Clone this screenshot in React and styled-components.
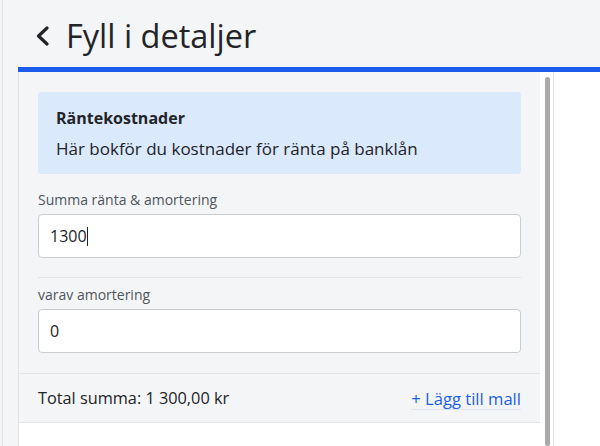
import React from "react";
import styled, { createGlobalStyle } from "styled-components";

const Global = createGlobalStyle`
  html, body { margin: 0; padding: 0; background: #f4f5f7; }
  body { font-family: "Open Sans", "Noto Sans", sans-serif; color: #222428; }
  * { box-sizing: border-box; }
`;

const Frame = styled.div`
  height: 446px;
  margin-left: 2px;
  border-left: 1px solid #e3e5e8;
  background: #f4f5f7;
  display: flex;
  flex-direction: column;
  overflow: hidden;
`;

const Header = styled.header`
  height: 67px;
  flex: none;
  display: flex;
  align-items: center;
  gap: 16px;
  padding: 4px 0 0 32px;
`;

const BackButton = styled.button`
  border: 0;
  background: none;
  padding: 0;
  display: flex;
  align-items: center;
  color: #222428;
  cursor: pointer;
`;

const Title = styled.h1`
  margin: 0;
  font-size: 32.5px;
  font-weight: 400;
  line-height: 40px;
  color: #222428;
`;

const Body = styled.div`
  flex: 1;
  margin-left: 15px;
  border-top: 5px solid #1b5cec;
  background: #fff;
  display: flex;
  min-height: 0;
`;

const Panel = styled.main`
  width: 522px;
  flex: none;
  border-left: 1px solid #e1e3e6;
  background: #fff;
  display: flex;
  flex-direction: column;
`;

const Form = styled.section`
  background: #f4f5f7;
  padding: 20px 19px 20px 19px;
  display: flex;
  flex-direction: column;
`;

const InfoBox = styled.div`
  background: #dbe9fd;
  border-radius: 3px;
  padding: 14px 18px 13px;
  display: flex;
  flex-direction: column;
  gap: 7px;
  margin-bottom: 15px;
`;

const InfoTitle = styled.div`
  font-size: 16px;
  font-weight: 700;
  line-height: 24px;
  color: #222428;
`;

const InfoText = styled.div`
  font-size: 17px;
  line-height: 24px;
  color: #222428;
`;

const Field = styled.label`
  display: flex;
  flex-direction: column;
  gap: 3px;
`;

const Label = styled.span`
  font-size: 14px;
  line-height: 22px;
  color: #50555c;
`;

const InputWrap = styled.div`
  position: relative;
`;

const Input = styled.input`
  height: 44px;
  width: 100%;
  border: 1px solid #c9cdd2;
  border-radius: 4px;
  background: #fff;
  padding: 0 11px;
  font-family: inherit;
  font-size: 16px;
  color: #222428;
  caret-color: #222;
  outline: none;
`;

const Caret = styled.span`
  position: absolute;
  top: 13px;
  left: ${(p) => p.$left}px;
  width: 1px;
  height: 19px;
  background: #222;
  pointer-events: none;
`;

const Divider = styled.hr`
  border: 0;
  border-top: 1px solid #e0e2e5;
  margin: 19px 0 6px;
`;

const Footer = styled.footer`
  height: 50px;
  background: #f4f5f7;
  border-top: 1px solid #e2e4e7;
  border-bottom: 1px solid #e2e4e7;
  padding: 0 19px;
  display: flex;
  align-items: center;
  justify-content: space-between;
`;

const Total = styled.span`
  font-size: 16.3px;
  color: #222428;
`;

const LinkButton = styled.a`
  font-size: 16.6px;
  color: #1c5fe6;
  text-decoration: underline;
  text-decoration-color: #dfe6f2;
  text-underline-offset: 4px;
  cursor: pointer;
`;

const ScrollTrack = styled.div`
  width: 14px;
  flex: none;
  background: #fff;
  border-right: 1px solid #e3e4e6;
  padding: 5px 4px 0 5px;
`;

const ScrollThumb = styled.div`
  width: 5px;
  height: 100%;
  border-radius: 3px;
  background: #a9a9aa;
`;

const Rest = styled.div`
  flex: 1;
  background: #fff;
`;

export default function App() {
  return (
    <>
      <Global />
      <Frame>
        <Header>
          <BackButton aria-label="Tillbaka">
            <svg width="15" height="20" viewBox="0 0 15 20" fill="none">
              <polyline
                points="12,2 3.5,10 12,18"
                stroke="#222428"
                strokeWidth="3.2"
                strokeLinecap="round"
                strokeLinejoin="round"
              />
            </svg>
          </BackButton>
          <Title>Fyll i detaljer</Title>
        </Header>
        <Body>
          <Panel>
            <Form>
              <InfoBox>
                <InfoTitle>Räntekostnader</InfoTitle>
                <InfoText>Här bokför du kostnader för ränta på banklån</InfoText>
              </InfoBox>
              <Field>
                <Label>Summa ränta &amp; amortering</Label>
                <InputWrap>
                  <Input defaultValue="1300" />
                  <Caret $left={49} />
                </InputWrap>
              </Field>
              <Divider />
              <Field>
                <Label>varav amortering</Label>
                <Input defaultValue="0" />
              </Field>
            </Form>
            <Footer>
              <Total>Total summa: 1 300,00 kr</Total>
              <LinkButton>+ Lägg till mall</LinkButton>
            </Footer>
          </Panel>
          <ScrollTrack>
            <ScrollThumb />
          </ScrollTrack>
          <Rest />
        </Body>
      </Frame>
    </>
  );
}
